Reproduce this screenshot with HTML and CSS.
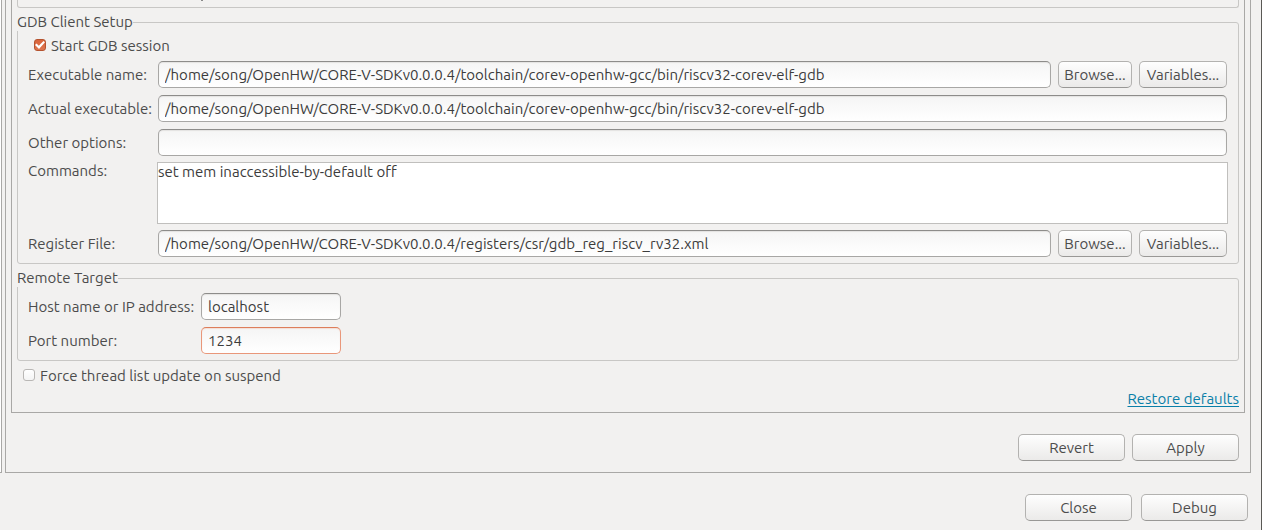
FILE: index.html
```html
<!DOCTYPE html>
<html lang="en">
<head>
<meta charset="utf-8">
<title>Debug Configurations</title>
<link rel="stylesheet" href="styles.css">
</head>
<body>
<form class="dialog">
  <div class="workspace">
    <div class="tree-pane"></div>
    <section class="config">
      <div class="tab-page">
        <div class="group-end"><span class="descender"></span></div>

        <fieldset class="group">
          <legend>GDB Client Setup</legend>
          <label class="check check-start"><input type="checkbox" checked>Start GDB session</label>
          <div class="rows">
            <div class="row">
              <label for="exe">Executable name:</label>
              <input class="field" id="exe" type="text" value="/home/song/OpenHW/CORE-V-SDKv0.0.0.4/toolchain/corev-openhw-gcc/bin/riscv32-corev-elf-gdb">
              <button type="button" class="btn browse">Browse...</button>
              <button type="button" class="btn variables">Variables...</button>
            </div>
            <div class="row">
              <label for="actual">Actual executable:</label>
              <input class="field" id="actual" type="text" readonly value="/home/song/OpenHW/CORE-V-SDKv0.0.0.4/toolchain/corev-openhw-gcc/bin/riscv32-corev-elf-gdb">
            </div>
            <div class="row">
              <label for="options">Other options:</label>
              <input class="field" id="options" type="text">
            </div>
            <div class="row row-top">
              <label for="commands">Commands:</label>
              <textarea class="commands" id="commands" spellcheck="false">set mem inaccessible-by-default off</textarea>
            </div>
            <div class="row">
              <label for="register">Register File:</label>
              <input class="field" id="register" type="text" value="/home/song/OpenHW/CORE-V-SDKv0.0.0.4/registers/csr/gdb_reg_riscv_rv32.xml">
              <button type="button" class="btn browse">Browse...</button>
              <button type="button" class="btn variables">Variables...</button>
            </div>
          </div>
        </fieldset>

        <fieldset class="group remote">
          <legend>Remote Target</legend>
          <div class="rows">
            <div class="row">
              <label for="host">Host name or IP address:</label>
              <input class="field short" id="host" type="text" value="localhost">
            </div>
            <div class="row">
              <label for="port">Port number:</label>
              <input class="field short active" id="port" type="text" value="1234">
            </div>
          </div>
        </fieldset>

        <label class="check check-force"><input type="checkbox">Force thread list update on suspend</label>
        <div class="restore"><a href="#">Restore defaults</a></div>
      </div>
      <div class="config-actions">
        <button type="button" class="btn wide">Revert</button>
        <button type="button" class="btn wide">Apply</button>
      </div>
    </section>
  </div>
  <div class="dialog-actions">
    <button type="button" class="btn wide">Close</button>
    <button type="button" class="btn wide">Debug</button>
  </div>
</form>
</body>
</html>
```
FILE: styles.css
```css
* { box-sizing: border-box; }

body {
  margin: 0;
  background: #f2f1f0;
  color: #4c4c4c;
  font: 15px/17px "Ubuntu", "Noto Sans", sans-serif;
}

input, textarea, button { font: inherit; color: inherit; margin: 0; }

.dialog {
  min-height: 100vh;
  border-right: 1px solid #5a5955;
}

.workspace { display: flex; gap: 3px; padding-right: 10px; }

.tree-pane {
  flex: none;
  width: 2px;
  background: #fff;
  border: solid #a9a8a6;
  border-width: 0 1px 1px 0;
}

.config {
  flex: 1;
  min-width: 0;
  border: 1px solid #a9a8a6;
  border-top: 0;
}

.tab-page {
  margin: 0 5px;
  padding: 0 5px 5px;
  border: 1px solid #a9a8a6;
  border-top: 0;
}

.group-end {
  height: 8px;
  padding-left: 183px;
  border: 1px solid #c8c7c5;
  border-top: 0;
  border-radius: 0 0 3px 3px;
}

.descender { display: block; width: 2px; height: 1px; background: #8a8a8a; }

.group {
  min-width: 0;
  margin: 6px 0 0;
  padding: 0;
  border: 1px solid #c8c7c5;
  border-radius: 3px;
}

.group legend {
  margin-left: -1px;
  padding: 0 0 2px;
  line-height: 15px;
  background: #f2f1f0;
}

.check { display: flex; align-items: flex-start; gap: 5px; width: fit-content; }
.check-start { margin: 6px 0 7px 16px; }
.check-force { margin: 6px 0 0 6px; }

.check input {
  appearance: none;
  width: 12px;
  height: 12px;
  margin-top: 2px;
  border: 1px solid #b9b7b5;
  border-radius: 3px;
  background: linear-gradient(#fff, #f4f4f4);
}

.check input:checked {
  display: grid;
  place-items: center;
  border-color: #b5532f;
  background: linear-gradient(#d9633a, #dd7650);
}

.check input:checked::before {
  content: "";
  width: 10px;
  height: 8px;
  background: #fff;
  clip-path: polygon(0 50%, 15% 32%, 38% 60%, 85% 0, 100% 15%, 40% 100%);
}

.rows {
  display: flex;
  flex-direction: column;
  gap: 7px;
  padding: 0 11px 6px 10px;
}

.row { display: flex; align-items: center; gap: 7px; }
.row > label { flex: none; width: 130px; margin-right: -7px; white-space: nowrap; }
.row-top { align-items: flex-start; }
.row-top > label { line-height: 15px; }

.remote .rows { padding-top: 6px; }
.remote .row > label { width: 173px; }

.field {
  flex: 1;
  min-width: 0;
  height: 27px;
  padding: 0 6px;
  border: 1px solid #a8a7a5;
  border-top-color: #8d8c8a;
  border-radius: 5px;
  background: linear-gradient(#f5f5f5, #fff);
  box-shadow: inset 0 1px 1px #e4e3e2;
  color: #3c3c3c;
  outline: 0;
}

.field.short { flex: none; width: 140px; }

.field.active {
  border-color: #e9977a;
  border-top-color: #dd7d5a;
  box-shadow: inset 0 1px 1px #f3ddd5;
}

.commands {
  flex: 1;
  min-width: 0;
  height: 62px;
  margin: -1px;
  padding: 0;
  border: 1px solid #c0bfbd;
  background: #fff;
  color: #3c3c3c;
  resize: none;
  outline: 0;
}

.btn {
  flex: none;
  height: 27px;
  padding: 0;
  border: 1px solid #b3b2b0;
  border-bottom-color: #999896;
  border-radius: 5px;
  background: linear-gradient(#fefefe, #ebeae9);
}

.browse { width: 74px; }
.variables { width: 88px; }
.wide { width: 107px; }

.restore { margin-top: 6px; text-align: right; }
.restore a { color: #0a7fa8; text-decoration: underline; text-underline-offset: 2px; }

.config-actions {
  display: flex;
  justify-content: flex-end;
  gap: 7px;
  padding: 21px 11px 11px;
}

.dialog-actions {
  display: flex;
  justify-content: flex-end;
  gap: 9px;
  padding: 21px 13px 9px;
}
```
